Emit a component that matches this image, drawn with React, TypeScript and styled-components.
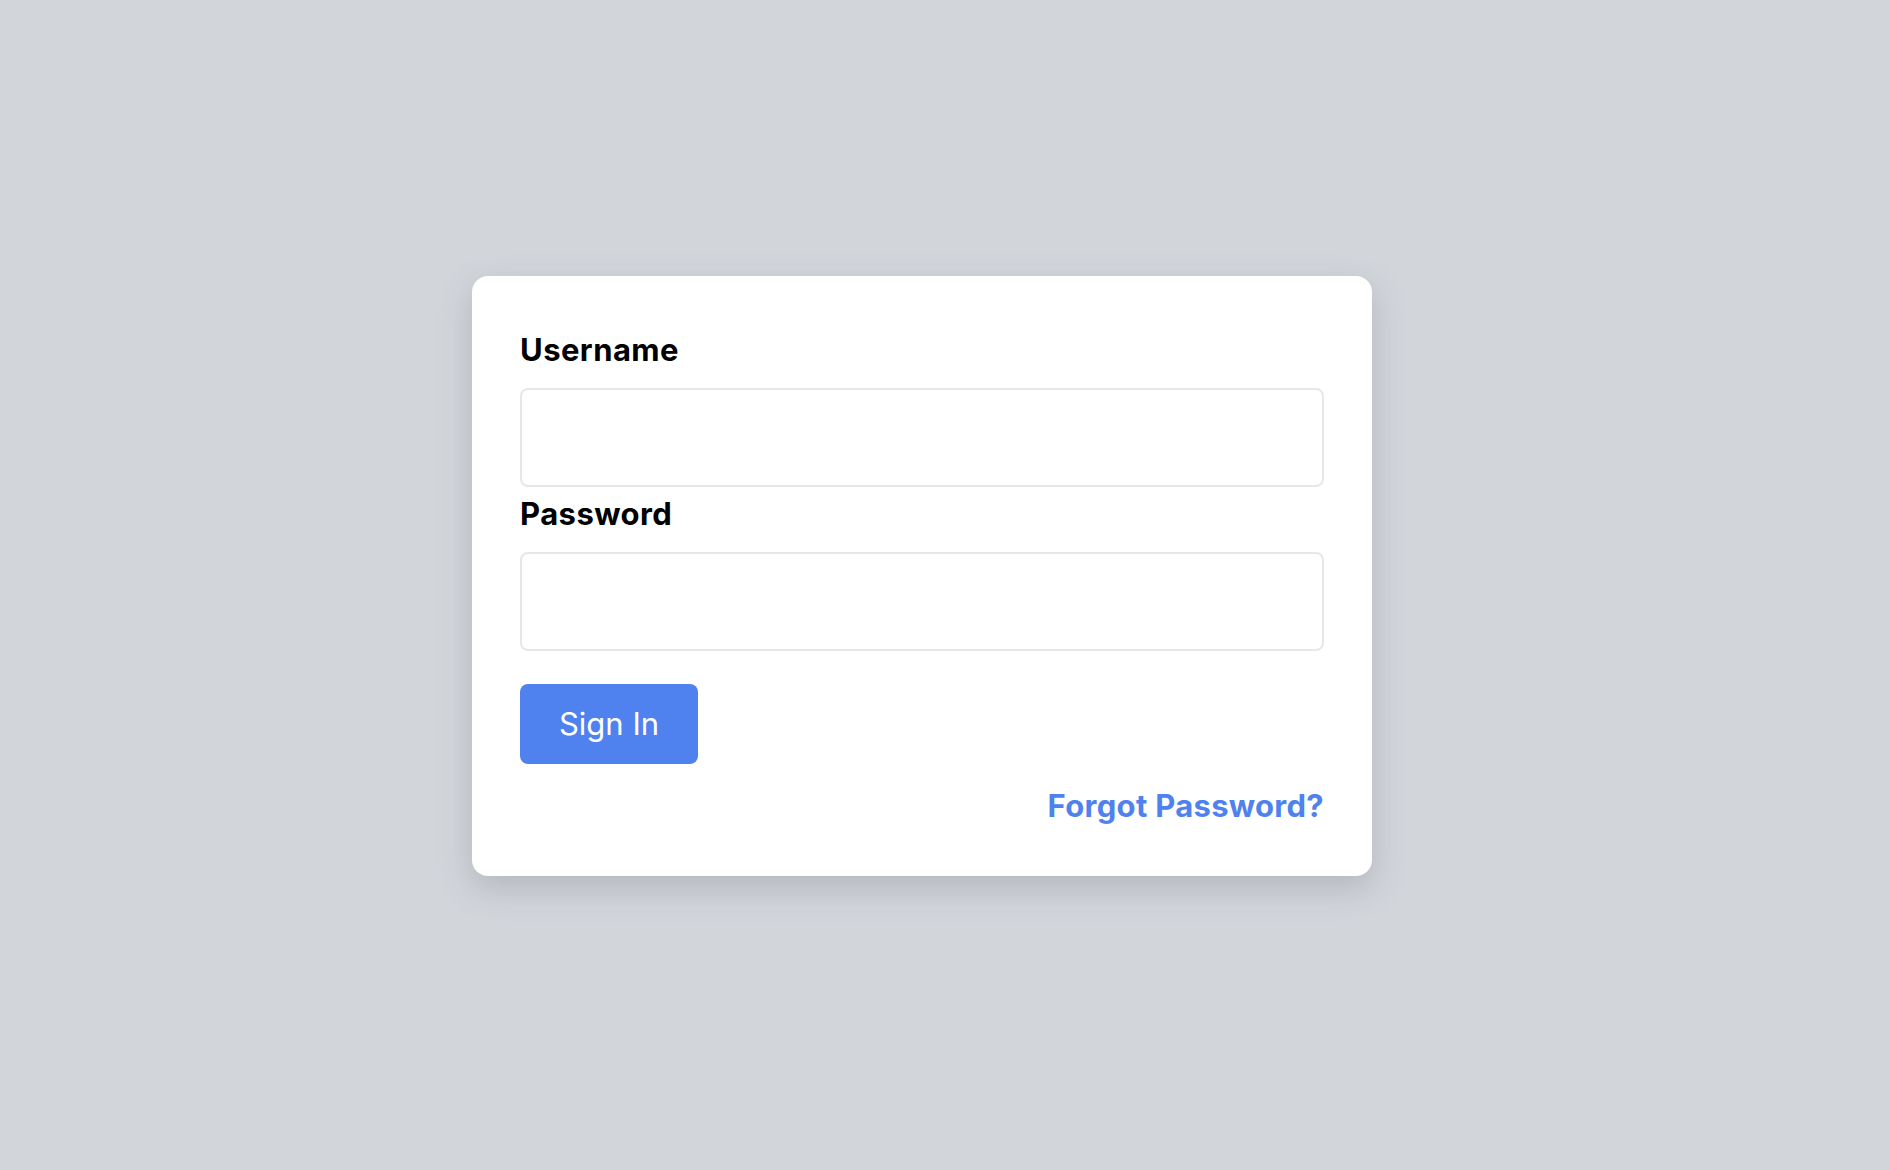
import styled, {createGlobalStyle} from 'styled-components'

const GlobalStyle = createGlobalStyle`
  html, body {
    margin: 0;
    padding: 0;
  }

  body {
    background: #d2d5da;
    font-family: Inter, 'Noto Sans', 'Liberation Sans', sans-serif;
  }
`

function LoginForm() {
  return (
    <Card onSubmit={(e) => e.preventDefault()}>
      <Label htmlFor="username">Username</Label>
      <Input id="username" type="text" />
      <Label htmlFor="password" $spaced>
        Password
      </Label>
      <Input id="password" type="password" />
      <SignInButton type="submit">Sign In</SignInButton>
      <ForgotLink href="#">Forgot Password?</ForgotLink>
    </Card>
  )
}

export default function App() {
  return (
    <>
      <GlobalStyle />
      <Page>
        <LoginForm />
      </Page>
    </>
  )
}

const Page = styled.main`
  min-height: 100vh;
  box-sizing: border-box;
  display: flex;
  align-items: center;
  justify-content: center;
  padding: 0 46px 19px 0;
`

const Card = styled.form`
  width: 900px;
  box-sizing: border-box;
  padding: 51px 48px 48px;
  display: flex;
  flex-direction: column;
  background: #ffffff;
  border-radius: 16px;
  box-shadow: 0 12px 32px rgba(100, 106, 118, 0.28);
`

const Label = styled.label<{$spaced?: boolean}>`
  display: block;
  color: #000;
  font-size: 31px;
  font-weight: 700;
  letter-spacing: 0.45px;
  line-height: 45px;
  margin-top: ${(p) => (p.$spaced ? '4px' : '0')};
  margin-bottom: 16px;
`

const Input = styled.input`
  width: 100%;
  height: 99px;
  box-sizing: border-box;
  border: 2px solid #e5e7eb;
  border-radius: 8px;
  padding: 0 20px;
  font-family: inherit;
  font-size: 28px;
  outline: none;
  background: #fff;
`

const SignInButton = styled.button`
  align-self: flex-start;
  margin-top: 33px;
  height: 80px;
  width: 178px;
  border: 0;
  border-radius: 8px;
  background: #4f82ee;
  color: #fff;
  font-family: inherit;
  font-size: 31px;
  font-weight: 400;
  cursor: pointer;
`

const ForgotLink = styled.a`
  align-self: flex-end;
  margin-top: 19px;
  color: #4f82ee;
  font-size: 31px;
  font-weight: 700;
  letter-spacing: 0.3px;
  line-height: 45px;
  text-decoration: none;
`
